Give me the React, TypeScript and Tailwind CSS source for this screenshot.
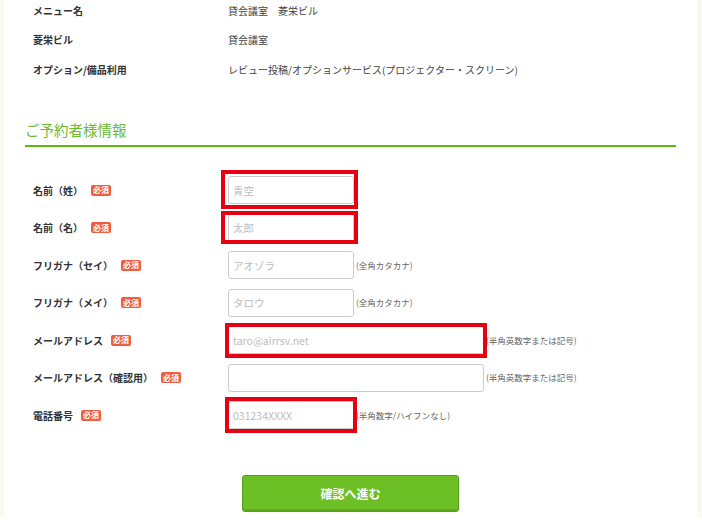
import React from "react";

function Badge() {
  return (
    <span className="ml-[8px] inline-flex h-[11px] w-[20px] items-center justify-center rounded-[2px] bg-[#ef5c41] text-[8px] font-bold leading-none text-white">
      必須
    </span>
  );
}

type RowProps = {
  label: string;
  placeholder?: string;
  wide?: boolean;
  hint?: string;
  red?: string;
  first?: boolean;
};

function FormRow({ label, placeholder, wide, hint, red, first }: RowProps) {
  return (
    <div className={`flex h-[28px] items-center ${first ? "" : "mt-[9.5px]"}`}>
      <div className="flex w-[224px] items-center pl-[29px] text-[10px] font-semibold text-[#333]">
        <span>{label}</span>
        <Badge />
      </div>
      <div className="relative flex items-center">
        <input
          readOnly
          placeholder={placeholder}
          className={`h-[28px] ${wide ? "w-[256px]" : "w-[126px]"} rounded-[3px] border border-[#cccccc] bg-white px-[4px] text-[10.5px] text-[#333] outline-none placeholder:text-[#bdbdbd]`}
        />
        {red ? (
          <div className={`pointer-events-none absolute border-[4px] border-[#e50012] ${red}`} />
        ) : null}
      </div>
      {hint ? (
        <span className="ml-[2px] whitespace-nowrap text-[8.5px] text-[#666]">{hint}</span>
      ) : null}
    </div>
  );
}

export default function App() {
  return (
    <div className="h-[531px] w-[702px] overflow-hidden bg-white font-['Noto_Sans_CJK_JP','Noto_Sans',sans-serif]">
      <div className="flex h-[517px] bg-[#f8faf2]">
        <div className="w-[4px]" />
        <div className="flex w-[693px] flex-col bg-white">
          {/* Info rows */}
          <div className="flex flex-col gap-[9.5px] text-[10px] text-[#333]">
            <div className="flex h-[20px] items-center">
              <div className="w-[224px] pl-[29px] font-semibold">メニュー名</div>
              <div className="text-[#444]">貸会議室　菱栄ビル</div>
            </div>
            <div className="flex h-[20px] items-center">
              <div className="w-[224px] pl-[29px] font-semibold">菱栄ビル</div>
              <div className="text-[#444]">貸会議室</div>
            </div>
            <div className="flex h-[20px] items-center">
              <div className="w-[224px] pl-[29px] font-semibold">オプション/備品利用</div>
              <div className="text-[#444]">レビュー投稿/オプションサービス(プロジェクター・スクリーン)</div>
            </div>
          </div>

          {/* Heading */}
          <div className="ml-[21px] mt-[41px] flex h-[20px] items-center text-[14.5px] text-[#6cba32]">
            ご予約者様情報
          </div>
          <div className="ml-[21px] mt-[5px] h-[2px] w-[651px] bg-[#5cb80f]" />

          {/* Form */}
          <div className="mt-[29px] flex flex-col">
            <FormRow first label="名前（姓）" placeholder="青空" red="-left-[7px] -top-[6px] h-[39px] w-[137px]" />
            <FormRow label="名前（名）" placeholder="太郎" red="-left-[7px] -top-[2.5px] h-[33px] w-[137px]" />
            <FormRow label="フリガナ（セイ）" placeholder="アオゾラ" hint="(全角カタカナ)" />
            <FormRow label="フリガナ（メイ）" placeholder="タロウ" hint="(全角カタカナ)" />
            <FormRow
              label="メールアドレス"
              placeholder="taro@airrsv.net"
              wide
              hint="(半角英数字または記号)"
              red="-left-[3px] -top-[3px] h-[35px] w-[262px]"
            />
            <FormRow label="メールアドレス（確認用）" wide hint="(半角英数字または記号)" />
            <FormRow
              label="電話番号"
              placeholder="031234XXXX"
              hint="(半角数字/ハイフンなし)"
              red="-left-[3px] -top-[4px] h-[36px] w-[132px]"
            />
          </div>

          {/* Button */}
          <div className="mt-[46px] flex justify-center">
            <button className="flex h-[37px] w-[217px] items-center justify-center rounded-[3px] border border-[#55a01c] bg-[#6cc025] text-[12px] font-bold text-white shadow-[inset_0_-2px_0_rgba(0,0,0,0.12)]">
              確認へ進む
            </button>
          </div>
        </div>
        <div className="flex-1" />
      </div>
    </div>
  );
}
